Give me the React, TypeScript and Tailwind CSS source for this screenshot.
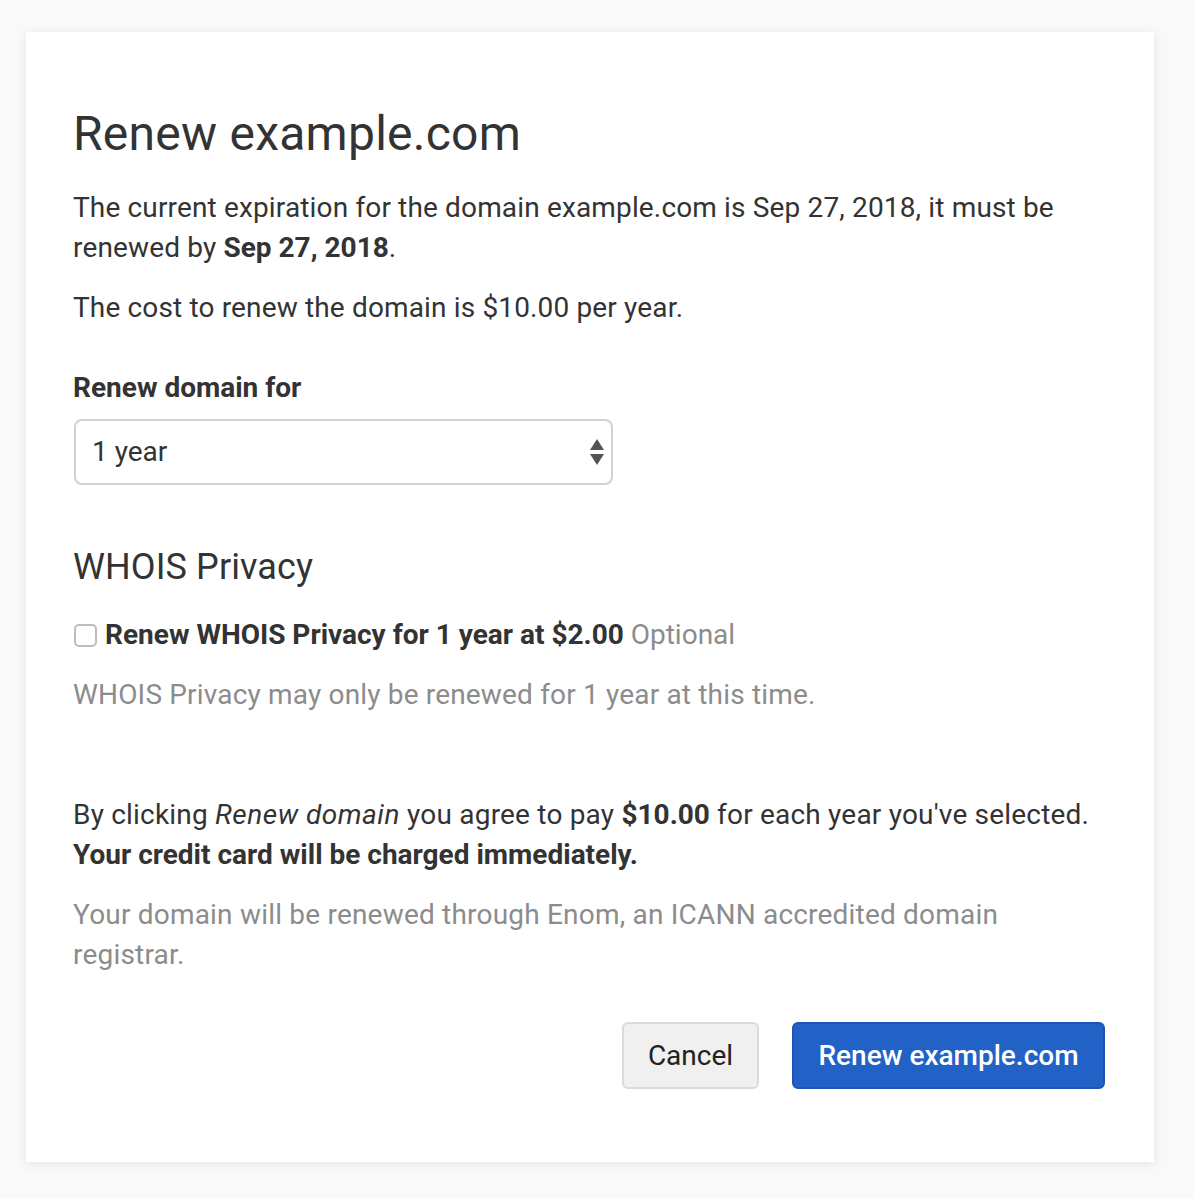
import { useState } from "react";

export default function App() {
  const [years, setYears] = useState("1");
  const [privacy, setPrivacy] = useState(false);

  return (
    <div className="min-h-screen bg-[#f9f9f9] pt-[32px] pb-[36px] pl-[26px] font-['Roboto',sans-serif] text-[#333]">
      <div className="w-[1128px] bg-white pl-[47px] pr-[48px] pt-[74px] pb-[73px] shadow-[0_2px_10px_rgba(0,0,0,0.09)]">
        <h1 className="text-[48px] leading-[56px] font-normal tracking-[0.25px]">Renew example.com</h1>

        <p className="mt-[26px] text-[28px] leading-[40px] tracking-[0.15px]">
          The current expiration for the domain example.com is Sep 27, 2018, it must be renewed by{" "}
          <strong className="font-bold tracking-normal">Sep 27, 2018</strong>.
        </p>
        <p className="mt-[20px] text-[28px] leading-[40px] tracking-[0.15px]">
          The cost to renew the domain is $10.00 per year.
        </p>

        <label htmlFor="years" className="mt-[40px] block text-[28px] leading-[40px] font-bold">
          Renew domain for
        </label>
        <div className="relative mt-[11px] ml-[1px] w-[539px]">
          <select
            id="years"
            value={years}
            onChange={(e) => setYears(e.target.value)}
            className="h-[66px] w-full appearance-none rounded-[8px] border-2 border-[#d2d2d2] bg-white pl-[16px] text-[28px] text-[#333] outline-none"
          >
            <option value="1">1 year</option>
            <option value="2">2 years</option>
            <option value="3">3 years</option>
          </select>
          {/* up/down arrows */}
          <svg
            className="pointer-events-none absolute right-[9px] top-1/2 -translate-y-1/2"
            width="14"
            height="26"
            viewBox="0 0 14 26"
            fill="#555"
          >
            <polygon points="7,0 14,11 0,11" />
            <polygon points="0,15 14,15 7,26" />
          </svg>
        </div>

        <h2 className="mt-[62px] text-[36px] leading-[40px] font-normal tracking-[0.1px]">WHOIS Privacy</h2>

        <label className="mt-[28px] flex items-center gap-[8px] pl-[1px] text-[28px] leading-[40px]">
          <input
            type="checkbox"
            checked={privacy}
            onChange={(e) => setPrivacy(e.target.checked)}
            className="h-[23px] w-[23px] shrink-0 appearance-none rounded-[5px] border-2 border-[#bdbdbd] bg-white"
          />
          <span>
            <span className="font-bold">Renew WHOIS Privacy for 1 year at $2.00</span>{" "}
            <span className="text-[#8c8c8c]">Optional</span>
          </span>
        </label>
        <p className="mt-[20px] text-[28px] leading-[40px] tracking-[0.17px] text-[#8c8c8c]">
          WHOIS Privacy may only be renewed for 1 year at this time.
        </p>

        <p className="mt-[80px] text-[28px] leading-[40px] tracking-[0.2px]">
          By clicking <em className="italic tracking-[0.5px]">Renew domain</em> you agree to pay{" "}
          <strong className="font-bold tracking-normal">$10.00</strong> for each year you've selected.{" "}
          <strong className="font-bold tracking-normal">Your credit card will be charged immediately.</strong>
        </p>
        <p className="mt-[20px] text-[28px] leading-[40px] tracking-[0.2px] text-[#8c8c8c]">
          Your domain will be renewed through Enom, an ICANN accredited domain registrar.
        </p>

        <div className="mt-[47px] flex justify-end gap-[33px] pr-[1px]">
          <button
            type="button"
            className="h-[67px] w-[137px] rounded-[6px] border-2 border-[#dadada] bg-[#f0f0f0] text-[28px] text-[#222]"
          >
            Cancel
          </button>
          <button
            type="button"
            className="h-[67px] w-[313px] rounded-[6px] border-2 border-[#1c55b3] bg-[#2262c6] text-[28px] font-medium text-white"
          >
            Renew example.com
          </button>
        </div>
      </div>
    </div>
  );
}
